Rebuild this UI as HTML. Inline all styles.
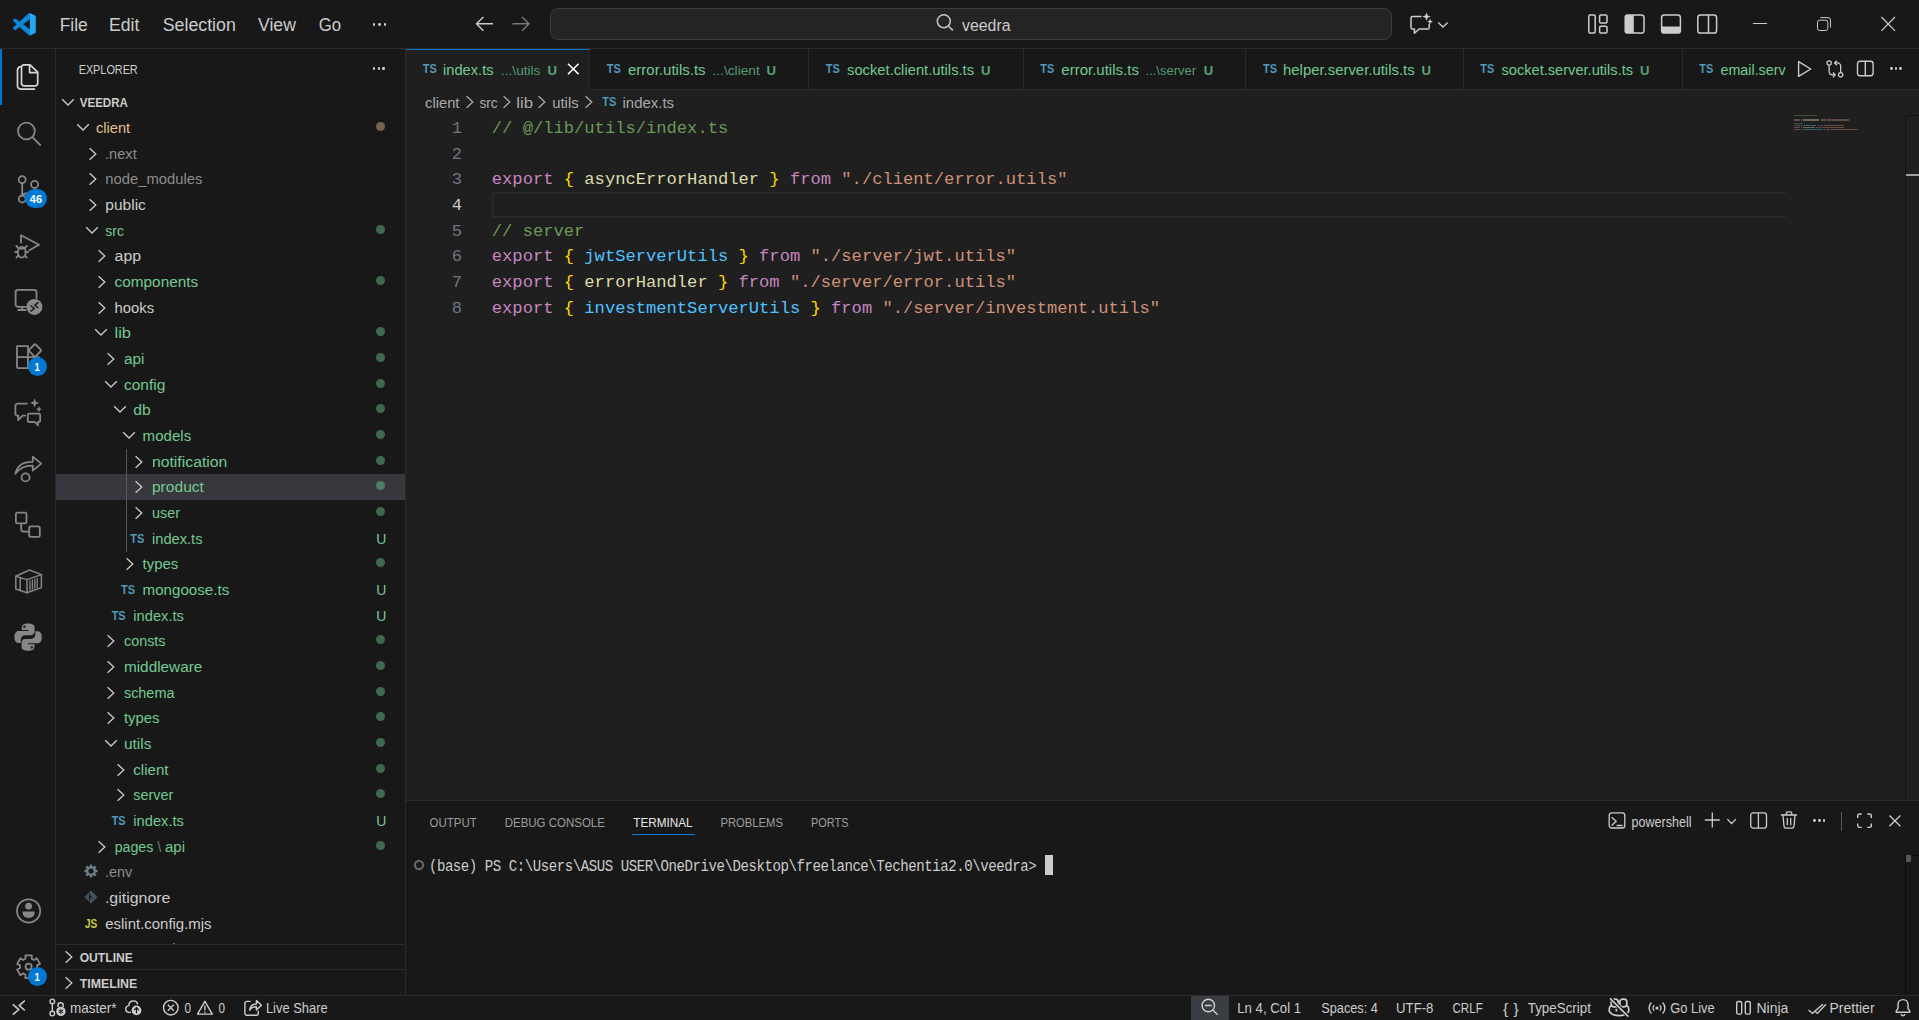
<!DOCTYPE html><html lang="en"><head><meta charset="utf-8"><title>index.ts - veedra - Visual Studio Code</title><style>

html,body{margin:0;padding:0;background:#181818;}
body{width:1919px;height:1020px;position:relative;overflow:hidden;font-family:"Liberation Sans",sans-serif;}
body>div,body>svg,body>span{position:absolute;display:block;}
svg{overflow:visible;}
.t{left:0;white-space:pre;line-height:24px;height:24px;transform-origin:0 0;}
.m{font-family:"Liberation Mono",monospace;}

</style></head><body>
<div style="left:406px;top:49px;width:1513px;height:751px;background:#1f1f1f;"></div>
<div style="left:0px;top:48px;width:1919px;height:1px;background:#2b2b2b;"></div>
<div style="left:55px;top:49px;width:1px;height:946px;background:#2b2b2b;"></div>
<div style="left:405px;top:49px;width:1px;height:946px;background:#2b2b2b;"></div>
<div style="left:0px;top:995px;width:1919px;height:1px;background:#2b2b2b;"></div>
<svg style="left:12.8px;top:12.6px;" width="22.6" height="22.6" viewBox="0 0 100 100" fill="none">
<path d="M96.46 10.8 L75.86 0.88 a6.23 6.23 0 0 0 -7.1 1.2 L29.35 38.04 12.19 25.01 a4.16 4.16 0 0 0 -5.32 0.24 L1.37 30.26 a4.17 4.17 0 0 0 0 6.16 L16.25 50 1.36 63.58 a4.17 4.17 0 0 0 0 6.16 l5.51 5.01 a4.16 4.16 0 0 0 5.32 .24 L29.35 61.96 68.76 97.92 a6.23 6.23 0 0 0 7.1 1.21 l20.6-9.91 A6.25 6.25 0 0 0 100 83.59 V16.41 a6.25 6.25 0 0 0 -3.54 -5.63 Z M75.01 72.7 L45.11 50 75.01 27.3 Z" fill="#1085d6" fill-rule="evenodd"/>
<path d="M75.01 1 L96.46 10.8 A6.25 6.25 0 0 1 100 16.41 V83.59 a6.25 6.25 0 0 1 -3.54 5.63 L75.01 99 Z" fill="#25a8f1"/>
</svg>
<div style="left:372.55px;top:22.75px;width:2.9px;height:2.9px;background:#cccccc;border-radius:50%;"></div>
<div style="left:378.05px;top:22.75px;width:2.9px;height:2.9px;background:#cccccc;border-radius:50%;"></div>
<div style="left:383.55px;top:22.75px;width:2.9px;height:2.9px;background:#cccccc;border-radius:50%;"></div>
<svg style="left:474px;top:13px;" width="22" height="22" viewBox="0 0 22 22" fill="none"><path d="M19 10.800H2.800M9.400 3.900L2.500 10.800l6.900 7" stroke="#cccccc" stroke-width="1.4"/></svg>
<svg style="left:510px;top:13px;" width="22" height="22" viewBox="0 0 22 22" fill="none"><path d="M2.500 10.800h16.200M12.100 3.900l6.900 6.900-6.900 7" stroke="#7a7a7a" stroke-width="1.4"/></svg>
<div style="left:550px;top:8px;width:842px;height:32px;background:#242424;box-sizing:border-box;border:1px solid #3c3c3c;border-radius:8px;"></div>
<svg style="left:934px;top:12px;" width="22" height="22" viewBox="0 0 22 22" fill="none"><circle cx="9.800" cy="9.300" r="6.500" stroke="#c4c4c4" stroke-width="1.500"/><path d="M14.300 14l4.600 4.400" stroke="#c4c4c4" stroke-width="1.500"/></svg>
<svg style="left:1406px;top:10px;" width="30" height="28" viewBox="0 0 30 28" fill="none"><path d="M15.500 6.400H6.600a1.600 1.600 0 0 0-1.600 1.600v9.400a1.600 1.600 0 0 0 1.600 1.600h1.800v4.200l4.800-4.200h8.400a1.600 1.600 0 0 0 1.600-1.600v-3.600" stroke="#cccccc" stroke-width="1.5" stroke-linejoin="round"/>
<path d="M20.500 2.400l1.200 3 3 1.200-3 1.200-1.200 3-1.200-3-3-1.200 3-1.200z" fill="#cccccc"/><path d="M24 8.700l.85 2 2 .85-2 .85-.85 2-.85-2-2-.85 2-.85z" fill="#cccccc"/></svg>
<svg style="left:1436px;top:18px;" width="14" height="12" viewBox="0 0 14 12" fill="none"><path d="M2.300 4.500L7 9l4.700-4.500" stroke="#cccccc" stroke-width="1.3"/></svg>
<svg style="left:1586px;top:12px;" width="24" height="24" viewBox="0 0 24 24" fill="none"><rect x="2.8" y="3.1" width="6.4" height="17.9" rx="1.2" stroke="#cccccc" stroke-width="1.5"/><rect x="13.6" y="3.1" width="7.4" height="7.9" rx="1.2" stroke="#cccccc" stroke-width="1.5"/><rect x="13.6" y="14.3" width="7.4" height="6.7" rx="1.2" stroke="#cccccc" stroke-width="1.5"/></svg>
<svg style="left:1623px;top:12px;" width="24" height="24" viewBox="0 0 24 24" fill="none"><rect x="2.2" y="3" width="18.8" height="18" rx="2.6" stroke="#cccccc" stroke-width="1.5"/><path d="M4.8 3h6v18h-6a2.6 2.6 0 0 1-2.6-2.6V5.600A2.600 2.600 0 0 1 4.800 3z" fill="#cccccc"/></svg>
<svg style="left:1659px;top:12px;" width="24" height="24" viewBox="0 0 24 24" fill="none"><rect x="2.6" y="3" width="18.800" height="18" rx="2.6" stroke="#cccccc" stroke-width="1.5"/><path d="M2.600 14.600h18.800v3.800a2.600 2.600 0 0 1-2.600 2.600H5.200a2.600 2.600 0 0 1-2.600-2.600z" fill="#cccccc"/></svg>
<svg style="left:1696px;top:12px;" width="24" height="24" viewBox="0 0 24 24" fill="none"><rect x="1.800" y="3" width="18.800" height="18" rx="2.600" stroke="#cccccc" stroke-width="1.5"/><path d="M12.500 3v18" stroke="#cccccc" stroke-width="1.5"/></svg>
<div style="left:1753px;top:23px;width:14px;height:1px;background:#cccccc;"></div>
<svg style="left:1815px;top:15px;" width="18" height="18" viewBox="0 0 18 18" fill="none"><rect x="2.5" y="5.200" width="10.300" height="10.300" rx="2" stroke="#cccccc" stroke-width="1"/><path d="M5.500 2.600h7.500a2.500 2.500 0 0 1 2.500 2.500v7.500" stroke="#cccccc" stroke-width="1"/></svg>
<svg style="left:1879px;top:15px;" width="18" height="18" viewBox="0 0 18 18" fill="none"><path d="M2.400 2l13.600 13.900M16 2L2.400 15.900" stroke="#cccccc" stroke-width="1.2"/></svg>
<div style="left:0px;top:49px;width:2px;height:56px;background:#0078d4;"></div>
<svg style="left:13.5px;top:63px;" width="28" height="28" viewBox="0 0 28 28" fill="none"><path d="M10 1.800H16L23.700 9.200V20.400a2.400 2.400 0 0 1-2.400 2.400H9.900a2.400 2.400 0 0 1-2.400-2.400V4.200a2.400 2.400 0 0 1 2.400-2.400z" stroke="#d7d7d7" stroke-width="1.7" fill="none" stroke-linejoin="round"/>
<path d="M15.600 2.200V9.600H23.300" stroke="#d7d7d7" stroke-width="1.7" fill="none" stroke-linejoin="round"/>
<path d="M6.200 3.600C4.600 4.200 3.500 5.400 3.500 7.200V22.800a3.400 3.400 0 0 0 3.400 3.400H20.400" stroke="#d7d7d7" stroke-width="1.7" fill="none" stroke-linecap="round"/></svg>
<svg style="left:13.5px;top:119px;" width="28" height="28" viewBox="0 0 28 28" fill="none"><circle cx="12.4" cy="12" r="8.4" stroke="#868686" stroke-width="1.8" fill="none" stroke-linejoin="round" stroke-linecap="round"/><path d="M18.6 18.4l7.6 7.6" stroke="#868686" stroke-width="1.8" fill="none" stroke-linejoin="round" stroke-linecap="round"/></svg>
<svg style="left:13.5px;top:176px;" width="28" height="28" viewBox="0 0 28 28" fill="none"><circle cx="8.200" cy="3.600" r="3.500" stroke="#868686" stroke-width="1.8" fill="none" stroke-linejoin="round" stroke-linecap="round"/><circle cx="8.200" cy="23" r="3.500" stroke="#868686" stroke-width="1.8" fill="none" stroke-linejoin="round" stroke-linecap="round"/><circle cx="20.600" cy="8.400" r="3.500" stroke="#868686" stroke-width="1.8" fill="none" stroke-linejoin="round" stroke-linecap="round"/><path d="M8.200 7.100v12.400M20.600 11.900v1.600a4 4 0 0 1-4 4H12.200a4 4 0 0 0-4 2.400" stroke="#868686" stroke-width="1.8" fill="none" stroke-linejoin="round" stroke-linecap="round"/></svg>
<div style="left:25px;top:189px;width:22px;height:19px;background:#0078d4;border-radius:10px;"></div>
<svg style="left:13.5px;top:232px;" width="28" height="28" viewBox="0 0 28 28" fill="none"><path d="M7 10.5V3.2l18 9.6-9.6 5.4" stroke="#868686" stroke-width="1.8" fill="none" stroke-linejoin="round" stroke-linecap="round"/>
<ellipse cx="7.800" cy="20.200" rx="4" ry="5.400" stroke="#868686" stroke-width="1.8" fill="none" stroke-linejoin="round" stroke-linecap="round"/><path d="M4.6 16.2L2.4 14M10.6 16.2l2.2-2.2M4 20H1.2M11.2 20H14M4.6 23.4l-2.2 2.2M10.6 23.4l2.2 2.2M5 16.6h5.2" stroke="#868686" stroke-width="1.8" fill="none" stroke-linejoin="round" stroke-linecap="round"/></svg>
<svg style="left:13.5px;top:288px;" width="28" height="28" viewBox="0 0 28 28" fill="none"><path d="M12 18.900H4A2.400 2.400 0 0 1 1.600 16.500V4.300A2.400 2.400 0 0 1 4 1.900h16.100a2.400 2.400 0 0 1 2.400 2.400V10" stroke="#868686" stroke-width="1.8" fill="none" stroke-linejoin="round" stroke-linecap="round"/><path d="M4.200 22h7.400M8.200 19.200v2.600" stroke="#868686" stroke-width="1.8" fill="none" stroke-linejoin="round" stroke-linecap="round"/>
<circle cx="20.400" cy="18.900" r="8" fill="#8a8a8a"/><path d="M16.500 17.500l3.700 3-3.700 2.900M24.300 14.400l-3.500 2.900 3.500 2.700" stroke="#181818" stroke-width="1.500" fill="none"/></svg>
<svg style="left:13.5px;top:344px;" width="28" height="28" viewBox="0 0 28 28" fill="none"><path d="M3 2.200h11v22H4.200A1.200 1.200 0 0 1 3 23zM3 13.200h22v9.800a1.200 1.200 0 0 1-1.200 1.200H14" stroke="#868686" stroke-width="1.8" fill="none" stroke-linejoin="round" stroke-linecap="round"/>
<rect x="16.400" y="1.800" width="9.200" height="9.200" rx="1.200" transform="rotate(45 21 6.400)" stroke="#868686" stroke-width="1.8" fill="none" stroke-linejoin="round" stroke-linecap="round"/></svg>
<div style="left:28px;top:357px;width:19px;height:19px;background:#0078d4;border-radius:50%;"></div>
<svg style="left:13.5px;top:399px;" width="28" height="28" viewBox="0 0 28 28" fill="none"><path d="M13 4.6H3.6A2.2 2.2 0 0 0 1.4 6.8v7.6a2.2 2.2 0 0 0 2.2 2.2h.6v4.6l4.400-4.600h2.600" stroke="#868686" stroke-width="1.8" fill="none" stroke-linejoin="round" stroke-linecap="round"/>
<path d="M15.400 14.600h9.200a1.600 1.600 0 0 1 1.600 1.600v5.200a1.600 1.600 0 0 1-1.600 1.600H24v3.400L20.800 23h-5.400a1.600 1.600 0 0 1-1.600-1.600v-5.200a1.600 1.600 0 0 1 1.600-1.600z" stroke="#868686" stroke-width="1.8" fill="none" stroke-linejoin="round" stroke-linecap="round"/>
<path d="M20.600 -0.600l1.300 3.300 3.300 1.300-3.300 1.300-1.300 3.300-1.300-3.300L16 4l3.300-1.300z" fill="#868686"/><path d="M25 7l.9 2.300 2.300.9-2.300.9-.9 2.300-.9-2.300-2.300-.9 2.300-.9z" fill="#868686"/></svg>
<svg style="left:13.5px;top:455px;" width="28" height="28" viewBox="0 0 28 28" fill="none"><path d="M1.400 18.800C3 10.600 9.400 6.600 18.800 6.800V1.600L27.200 8.600l-8.400 7v-5C11 10.400 5.400 13 1.400 18.800Z" stroke="#868686" stroke-width="1.8" fill="none" stroke-linejoin="round" stroke-linecap="round"/><circle cx="11.600" cy="22.400" r="4" stroke="#868686" stroke-width="1.8" fill="none" stroke-linejoin="round" stroke-linecap="round"/></svg>
<svg style="left:13.5px;top:511px;" width="28" height="28" viewBox="0 0 28 28" fill="none"><rect x="1.900" y="1.700" width="10.600" height="10.600" rx="1.600" stroke="#868686" stroke-width="1.8" fill="none" stroke-linejoin="round" stroke-linecap="round"/><rect x="15.200" y="15.300" width="10.600" height="10.600" rx="1.600" stroke="#868686" stroke-width="1.8" fill="none" stroke-linejoin="round" stroke-linecap="round"/><path d="M7.200 12.600V18a2.600 2.600 0 0 0 2.600 2.600h5.200" stroke="#868686" stroke-width="1.8" fill="none" stroke-linejoin="round" stroke-linecap="round"/></svg>
<svg style="left:13.5px;top:567px;" width="28" height="28" viewBox="0 0 28 28" fill="none"><path d="M1.800 9.200L15.400 3l12 4.600v13L13 25.800 1.800 22z" stroke="#868686" stroke-width="1.5" fill="none" stroke-linejoin="round" stroke-linecap="round"/><path d="M1.800 9.200L13 12.600l14.400-5M13 12.600v13.200M6.200 10.800v12.600" stroke="#868686" stroke-width="1.5" fill="none" stroke-linejoin="round" stroke-linecap="round"/>
<path d="M16 13.400v10M18.400 12.600v10M20.800 11.800v10M23.200 11v10" stroke="#868686" stroke-width="1.3"/></svg>
<svg style="left:13.5px;top:623px;" width="28" height="28" viewBox="0 0 28 28" fill="none"><path d="M13.800 0.400c-3.600 0-6 1.200-6 3.600v3h6.400v1H4.600C2 8 0.400 10.400 0.400 14s1.400 6 4 6h2.400v-3.400c0-2.400 2-4.400 4.400-4.400h6c2 0 3.400-1.600 3.400-3.600V4c0-2.200-2.400-3.600-6.800-3.600zM10.400 2.600a1.200 1.200 0 1 1 0 2.400 1.200 1.200 0 0 1 0-2.400z" fill="#868686" fill-rule="evenodd"/>
<path d="M14.400 27.800c3.600 0 6-1.200 6-3.600v-3H14v-1h9.600c2.600 0 4.200-2.400 4.200-6s-1.400-6-4-6h-2.400v3.400c0 2.400-2 4.400-4.400 4.400h-6c-2 0-3.400 1.600-3.400 3.600v4.600c0 2.200 2.400 3.600 6.800 3.600zM17.800 25.600a1.200 1.200 0 1 1 0-2.400 1.200 1.200 0 0 1 0 2.400z" fill="#868686" fill-rule="evenodd"/></svg>
<svg style="left:13.5px;top:897px;" width="28" height="28" viewBox="0 0 28 28" fill="none"><circle cx="14.600" cy="13.900" r="11.600" stroke="#868686" stroke-width="1.8" fill="none" stroke-linejoin="round" stroke-linecap="round"/><circle cx="14.600" cy="9.200" r="3.400" fill="#868686"/><path d="M8.600 14.600h12v1.200c0 3-2.400 5.200-6 5.200s-6-2.200-6-5.200z" fill="#868686"/></svg>
<svg style="left:13.5px;top:953px;" width="28" height="28" viewBox="0 0 28 28" fill="none"><path d="M11.35 2.36L17.85 2.36L17.68 5.67L20.01 7.02L22.80 5.21L26.05 10.85L23.09 12.35L23.09 15.05L26.05 16.55L22.80 22.19L20.01 20.38L17.68 21.73L17.85 25.04L11.35 25.04L11.52 21.73L9.19 20.38L6.40 22.19L3.15 16.55L6.11 15.05L6.11 12.35L3.15 10.85L6.40 5.21L9.19 7.02L11.52 5.67Z" stroke="#868686" stroke-width="1.8" fill="none" stroke-linejoin="round" stroke-linecap="round"/><circle cx="14.6" cy="13.7" r="3" stroke="#868686" stroke-width="1.8" fill="none" stroke-linejoin="round" stroke-linecap="round"/></svg>
<div style="left:28px;top:967px;width:19px;height:19px;background:#0078d4;border-radius:50%;"></div>
<div style="left:372.7px;top:67.0px;width:2.6px;height:2.6px;background:#cccccc;border-radius:50%;"></div>
<div style="left:377.5px;top:67.0px;width:2.6px;height:2.6px;background:#cccccc;border-radius:50%;"></div>
<div style="left:382.3px;top:67.0px;width:2.6px;height:2.6px;background:#cccccc;border-radius:50%;"></div>
<div style="left:56px;top:474px;width:349px;height:26px;background:#37373d;"></div>
<div style="left:126px;top:449px;width:1px;height:103px;background:#585858;"></div>
<svg style="left:61px;top:94.5px;" width="14" height="14" viewBox="0 0 14 14" fill="none"><path d="M1.200 4.200L7 10l5.800-5.800" stroke="#cccccc" stroke-width="1.3"/></svg>
<svg style="left:75.83299999999998px;top:120.10000000000001px;" width="14" height="14" viewBox="0 0 14 14" fill="none"><path d="M1.200 4.200L7 10l5.800-5.800" stroke="#cccccc" stroke-width="1.3"/></svg>
<div style="left:375.6px;top:122.10000000000001px;width:9.2px;height:9.2px;background:#75634f;border-radius:50%;"></div>
<svg style="left:85.66599999999998px;top:146.6px;" width="14" height="14" viewBox="0 0 14 14" fill="none"><path d="M3.600 1.200L9.800 7l-6.200 5.800" stroke="#cccccc" stroke-width="1.3"/></svg>
<svg style="left:85.66599999999998px;top:171.6px;" width="14" height="14" viewBox="0 0 14 14" fill="none"><path d="M3.600 1.200L9.800 7l-6.200 5.800" stroke="#cccccc" stroke-width="1.3"/></svg>
<svg style="left:85.66599999999998px;top:197.6px;" width="14" height="14" viewBox="0 0 14 14" fill="none"><path d="M3.600 1.200L9.800 7l-6.200 5.800" stroke="#cccccc" stroke-width="1.3"/></svg>
<svg style="left:85.16599999999998px;top:223.1px;" width="14" height="14" viewBox="0 0 14 14" fill="none"><path d="M1.200 4.200L7 10l5.800-5.800" stroke="#cccccc" stroke-width="1.3"/></svg>
<div style="left:375.7px;top:225.20000000000002px;width:9px;height:9px;background:#3d6a4f;border-radius:50%;"></div>
<svg style="left:94.99899999999998px;top:248.6px;" width="14" height="14" viewBox="0 0 14 14" fill="none"><path d="M3.600 1.200L9.800 7l-6.200 5.800" stroke="#cccccc" stroke-width="1.3"/></svg>
<svg style="left:94.99899999999998px;top:274.59999999999997px;" width="14" height="14" viewBox="0 0 14 14" fill="none"><path d="M3.600 1.200L9.800 7l-6.200 5.800" stroke="#cccccc" stroke-width="1.3"/></svg>
<div style="left:375.7px;top:276.2px;width:9px;height:9px;background:#3d6a4f;border-radius:50%;"></div>
<svg style="left:94.99899999999998px;top:300.59999999999997px;" width="14" height="14" viewBox="0 0 14 14" fill="none"><path d="M3.600 1.200L9.800 7l-6.200 5.800" stroke="#cccccc" stroke-width="1.3"/></svg>
<svg style="left:94.49899999999998px;top:325.09999999999997px;" width="14" height="14" viewBox="0 0 14 14" fill="none"><path d="M1.200 4.200L7 10l5.800-5.800" stroke="#cccccc" stroke-width="1.3"/></svg>
<div style="left:375.7px;top:327.2px;width:9px;height:9px;background:#3d6a4f;border-radius:50%;"></div>
<svg style="left:104.33199999999998px;top:351.59999999999997px;" width="14" height="14" viewBox="0 0 14 14" fill="none"><path d="M3.600 1.200L9.800 7l-6.200 5.800" stroke="#cccccc" stroke-width="1.3"/></svg>
<div style="left:375.7px;top:353.2px;width:9px;height:9px;background:#3d6a4f;border-radius:50%;"></div>
<svg style="left:103.83199999999998px;top:377.09999999999997px;" width="14" height="14" viewBox="0 0 14 14" fill="none"><path d="M1.200 4.200L7 10l5.800-5.800" stroke="#cccccc" stroke-width="1.3"/></svg>
<div style="left:375.7px;top:379.2px;width:9px;height:9px;background:#3d6a4f;border-radius:50%;"></div>
<svg style="left:113.16499999999998px;top:402.09999999999997px;" width="14" height="14" viewBox="0 0 14 14" fill="none"><path d="M1.200 4.200L7 10l5.800-5.800" stroke="#cccccc" stroke-width="1.3"/></svg>
<div style="left:375.7px;top:404.2px;width:9px;height:9px;background:#3d6a4f;border-radius:50%;"></div>
<svg style="left:122.49800000000002px;top:428.09999999999997px;" width="14" height="14" viewBox="0 0 14 14" fill="none"><path d="M1.200 4.200L7 10l5.800-5.800" stroke="#cccccc" stroke-width="1.3"/></svg>
<div style="left:375.7px;top:430.2px;width:9px;height:9px;background:#3d6a4f;border-radius:50%;"></div>
<svg style="left:132.331px;top:454.59999999999997px;" width="14" height="14" viewBox="0 0 14 14" fill="none"><path d="M3.600 1.200L9.800 7l-6.200 5.800" stroke="#cccccc" stroke-width="1.3"/></svg>
<div style="left:375.7px;top:456.2px;width:9px;height:9px;background:#3d6a4f;border-radius:50%;"></div>
<svg style="left:132.331px;top:479.59999999999997px;" width="14" height="14" viewBox="0 0 14 14" fill="none"><path d="M3.600 1.200L9.800 7l-6.200 5.800" stroke="#cccccc" stroke-width="1.3"/></svg>
<div style="left:375.7px;top:481.2px;width:9px;height:9px;background:#4d7d63;border-radius:50%;"></div>
<svg style="left:132.331px;top:505.6px;" width="14" height="14" viewBox="0 0 14 14" fill="none"><path d="M3.600 1.200L9.800 7l-6.200 5.800" stroke="#cccccc" stroke-width="1.3"/></svg>
<div style="left:375.7px;top:507.2px;width:9px;height:9px;background:#3d6a4f;border-radius:50%;"></div>
<svg style="left:122.99800000000002px;top:556.6px;" width="14" height="14" viewBox="0 0 14 14" fill="none"><path d="M3.600 1.200L9.800 7l-6.200 5.800" stroke="#cccccc" stroke-width="1.3"/></svg>
<div style="left:375.7px;top:558.1999999999999px;width:9px;height:9px;background:#3d6a4f;border-radius:50%;"></div>
<svg style="left:104.33199999999998px;top:633.6px;" width="14" height="14" viewBox="0 0 14 14" fill="none"><path d="M3.600 1.200L9.800 7l-6.200 5.800" stroke="#cccccc" stroke-width="1.3"/></svg>
<div style="left:375.7px;top:635.1999999999999px;width:9px;height:9px;background:#3d6a4f;border-radius:50%;"></div>
<svg style="left:104.33199999999998px;top:659.6px;" width="14" height="14" viewBox="0 0 14 14" fill="none"><path d="M3.600 1.200L9.800 7l-6.200 5.800" stroke="#cccccc" stroke-width="1.3"/></svg>
<div style="left:375.7px;top:661.1999999999999px;width:9px;height:9px;background:#3d6a4f;border-radius:50%;"></div>
<svg style="left:104.33199999999998px;top:685.6px;" width="14" height="14" viewBox="0 0 14 14" fill="none"><path d="M3.600 1.200L9.800 7l-6.200 5.800" stroke="#cccccc" stroke-width="1.3"/></svg>
<div style="left:375.7px;top:687.1999999999999px;width:9px;height:9px;background:#3d6a4f;border-radius:50%;"></div>
<svg style="left:104.33199999999998px;top:710.6px;" width="14" height="14" viewBox="0 0 14 14" fill="none"><path d="M3.600 1.200L9.800 7l-6.200 5.800" stroke="#cccccc" stroke-width="1.3"/></svg>
<div style="left:375.7px;top:712.1999999999999px;width:9px;height:9px;background:#3d6a4f;border-radius:50%;"></div>
<svg style="left:103.83199999999998px;top:736.1px;" width="14" height="14" viewBox="0 0 14 14" fill="none"><path d="M1.200 4.200L7 10l5.800-5.800" stroke="#cccccc" stroke-width="1.3"/></svg>
<div style="left:375.7px;top:738.1999999999999px;width:9px;height:9px;background:#3d6a4f;border-radius:50%;"></div>
<svg style="left:113.66499999999998px;top:762.6px;" width="14" height="14" viewBox="0 0 14 14" fill="none"><path d="M3.600 1.200L9.800 7l-6.200 5.800" stroke="#cccccc" stroke-width="1.3"/></svg>
<div style="left:375.7px;top:764.1999999999999px;width:9px;height:9px;background:#3d6a4f;border-radius:50%;"></div>
<svg style="left:113.66499999999998px;top:787.6px;" width="14" height="14" viewBox="0 0 14 14" fill="none"><path d="M3.600 1.200L9.800 7l-6.200 5.800" stroke="#cccccc" stroke-width="1.3"/></svg>
<div style="left:375.7px;top:789.1999999999999px;width:9px;height:9px;background:#3d6a4f;border-radius:50%;"></div>
<svg style="left:94.99899999999998px;top:839.6px;" width="14" height="14" viewBox="0 0 14 14" fill="none"><path d="M3.600 1.200L9.800 7l-6.200 5.800" stroke="#cccccc" stroke-width="1.3"/></svg>
<div style="left:375.7px;top:841.1999999999999px;width:9px;height:9px;background:#3d6a4f;border-radius:50%;"></div>
<svg style="left:82.76599999999999px;top:863.1px;" width="16" height="16" viewBox="0 0 16 16" fill="none"><path d="M14.60 6.84L14.60 9.16L12.86 9.17L12.26 10.61L13.49 11.84L11.84 13.49L10.61 12.26L9.17 12.86L9.16 14.60L6.84 14.60L6.83 12.86L5.39 12.26L4.16 13.49L2.51 11.84L3.74 10.61L3.14 9.17L1.40 9.16L1.40 6.84L3.14 6.83L3.74 5.39L2.51 4.16L4.16 2.51L5.39 3.74L6.83 3.14L6.84 1.40L9.16 1.40L9.17 3.14L10.61 3.74L11.84 2.51L13.49 4.16L12.26 5.39L12.86 6.83Z M8 5.400a2.600 2.600 0 1 0 0 5.200a2.600 2.600 0 1 0 0-5.200z" fill="#6d8086" fill-rule="evenodd"/></svg>
<svg style="left:82.56599999999999px;top:889.1999999999999px;" width="16" height="16" viewBox="0 0 16 16" fill="none"><rect x="3.400" y="3.400" width="9.200" height="9.200" transform="rotate(45 8 8)" fill="#41535b"/><path d="M6.600 4.800v6.400M6.600 7l3 2.400" stroke="#181818" stroke-width="1.1"/></svg>
<div style="left:173px;top:943px;width:2px;height:1px;background:#666666;"></div>
<div style="left:56px;top:944px;width:349px;height:1px;background:#2b2b2b;"></div>
<div style="left:56px;top:969px;width:349px;height:1px;background:#2b2b2b;"></div>
<svg style="left:61.599999999999994px;top:950px;" width="14" height="14" viewBox="0 0 14 14" fill="none"><path d="M3.600 1.200L9.800 7l-6.200 5.800" stroke="#cccccc" stroke-width="1.3"/></svg>
<svg style="left:61.599999999999994px;top:975.8px;" width="14" height="14" viewBox="0 0 14 14" fill="none"><path d="M3.600 1.200L9.800 7l-6.200 5.800" stroke="#cccccc" stroke-width="1.3"/></svg>
<div style="left:406px;top:49px;width:1513px;height:41px;background:#181818;"></div>
<div style="left:406px;top:89px;width:1513px;height:1px;background:#2b2b2b;"></div>
<div style="left:406px;top:49px;width:183px;height:41px;background:#1f1f1f;"></div>
<div style="left:406px;top:49px;width:183px;height:1px;background:#0078d4;"></div>
<div style="left:589px;top:49px;width:1px;height:41px;background:#2b2b2b;"></div>
<div style="left:808px;top:49px;width:1px;height:41px;background:#2b2b2b;"></div>
<div style="left:1023px;top:49px;width:1px;height:41px;background:#2b2b2b;"></div>
<div style="left:1245px;top:49px;width:1px;height:41px;background:#2b2b2b;"></div>
<div style="left:1463px;top:49px;width:1px;height:41px;background:#2b2b2b;"></div>
<div style="left:1682px;top:49px;width:1px;height:41px;background:#2b2b2b;"></div>
<svg style="left:566px;top:61px;" width="15" height="15" viewBox="0 0 15 15" fill="none"><path d="M2 2.700l10.600 10.400M12.600 2.700L2 13.100" stroke="#ffffff" stroke-width="1.5"/></svg>
<svg style="left:1794px;top:59px;" width="20" height="20" viewBox="0 0 20 20" fill="none"><path d="M4.600 2.600v14.800L16.800 10z" stroke="#cccccc" stroke-width="1.4" stroke-linejoin="round"/></svg>
<svg style="left:1825px;top:59px;" width="20" height="20" viewBox="0 0 20 20" fill="none"><g transform="scale(0.9)"><circle cx="4.600" cy="4.400" r="2.400" stroke="#cccccc" stroke-width="1.4"/><circle cx="17.400" cy="17.600" r="2.400" stroke="#cccccc" stroke-width="1.4"/>
<path d="M4.600 6.800v7.400a3.400 3.400 0 0 0 3.400 3.400h3.200M8.800 15l2.600 2.600-2.600 2.600M17.400 15.200V7.800a3.400 3.400 0 0 0-3.400-3.400h-3.200M13.200 7l-2.600-2.600 2.600-2.600" stroke="#cccccc" stroke-width="1.4"/></g></svg>
<svg style="left:1855px;top:59px;" width="20" height="20" viewBox="0 0 20 20" fill="none"><rect x="2.500" y="2.300" width="15.600" height="14.400" rx="2.400" stroke="#cccccc" stroke-width="1.4"/><path d="M10.300 2.300v14.400" stroke="#cccccc" stroke-width="1.4"/></svg>
<div style="left:1889.9px;top:67.4px;width:2.8px;height:2.8px;background:#cccccc;border-radius:50%;"></div>
<div style="left:1894.6px;top:67.4px;width:2.8px;height:2.8px;background:#cccccc;border-radius:50%;"></div>
<div style="left:1899.3px;top:67.4px;width:2.8px;height:2.8px;background:#cccccc;border-radius:50%;"></div>
<svg style="left:463.3px;top:94.9px;" width="14" height="14" viewBox="0 0 14 14" fill="none"><path d="M3.600 1.200L9.800 7l-6.200 5.800" stroke="#a9a9a9" stroke-width="1.3"/></svg>
<svg style="left:500.3px;top:94.9px;" width="14" height="14" viewBox="0 0 14 14" fill="none"><path d="M3.600 1.200L9.800 7l-6.200 5.800" stroke="#a9a9a9" stroke-width="1.3"/></svg>
<svg style="left:535.4px;top:94.9px;" width="14" height="14" viewBox="0 0 14 14" fill="none"><path d="M3.600 1.200L9.800 7l-6.200 5.800" stroke="#a9a9a9" stroke-width="1.3"/></svg>
<svg style="left:581.9px;top:94.9px;" width="14" height="14" viewBox="0 0 14 14" fill="none"><path d="M3.600 1.200L9.800 7l-6.200 5.800" stroke="#a9a9a9" stroke-width="1.3"/></svg>
<div style="left:492px;top:192px;width:1294px;height:26px;box-sizing:border-box;border:2px solid #282828;border-right:none;"></div>
<div style="left:1794.0px;top:115.2px;width:22.5px;height:1.2px;background:#45603b;opacity:.8;"></div>
<div style="left:1794.0px;top:119.4px;width:5.9px;height:1.2px;background:#6d5470;opacity:.8;"></div>
<div style="left:1800.9px;top:119.4px;width:1.0px;height:1.2px;background:#7d6f22;opacity:.8;"></div>
<div style="left:1802.8px;top:119.4px;width:16.7px;height:1.2px;background:#7d7d66;opacity:.8;"></div>
<div style="left:1820.5px;top:119.4px;width:1.0px;height:1.2px;background:#7d6f22;opacity:.8;"></div>
<div style="left:1822.4px;top:119.4px;width:3.9px;height:1.2px;background:#6d5470;opacity:.8;"></div>
<div style="left:1827.3px;top:119.4px;width:21.6px;height:1.2px;background:#73574a;opacity:.8;"></div>
<div style="left:1794.0px;top:123.2px;width:8.8px;height:1.2px;background:#45603b;opacity:.8;"></div>
<div style="left:1794.0px;top:125.2px;width:5.9px;height:1.2px;background:#6d5470;opacity:.8;"></div>
<div style="left:1800.9px;top:125.2px;width:1.0px;height:1.2px;background:#7d6f22;opacity:.8;"></div>
<div style="left:1802.8px;top:125.2px;width:13.7px;height:1.2px;background:#33708f;opacity:.8;"></div>
<div style="left:1817.5px;top:125.2px;width:1.0px;height:1.2px;background:#7d6f22;opacity:.8;"></div>
<div style="left:1819.5px;top:125.2px;width:3.9px;height:1.2px;background:#6d5470;opacity:.8;"></div>
<div style="left:1824.4px;top:125.2px;width:19.6px;height:1.2px;background:#73574a;opacity:.8;"></div>
<div style="left:1794.0px;top:127.3px;width:5.9px;height:1.2px;background:#6d5470;opacity:.8;"></div>
<div style="left:1800.9px;top:127.3px;width:1.0px;height:1.2px;background:#7d6f22;opacity:.8;"></div>
<div style="left:1802.8px;top:127.3px;width:11.8px;height:1.2px;background:#7d7d66;opacity:.8;"></div>
<div style="left:1815.6px;top:127.3px;width:1.0px;height:1.2px;background:#7d6f22;opacity:.8;"></div>
<div style="left:1817.5px;top:127.3px;width:3.9px;height:1.2px;background:#6d5470;opacity:.8;"></div>
<div style="left:1822.4px;top:127.3px;width:21.6px;height:1.2px;background:#73574a;opacity:.8;"></div>
<div style="left:1794.0px;top:129.3px;width:5.9px;height:1.2px;background:#6d5470;opacity:.8;"></div>
<div style="left:1800.9px;top:129.3px;width:1.0px;height:1.2px;background:#7d6f22;opacity:.8;"></div>
<div style="left:1802.8px;top:129.3px;width:20.6px;height:1.2px;background:#33708f;opacity:.8;"></div>
<div style="left:1824.4px;top:129.3px;width:1.0px;height:1.2px;background:#7d6f22;opacity:.8;"></div>
<div style="left:1826.3px;top:129.3px;width:3.9px;height:1.2px;background:#6d5470;opacity:.8;"></div>
<div style="left:1831.2px;top:129.3px;width:26.5px;height:1.2px;background:#73574a;opacity:.8;"></div>
<div style="left:1905px;top:115px;width:1px;height:685px;background:#101114;"></div>
<div style="left:1905px;top:115px;width:14px;height:1px;background:#101114;"></div>
<div style="left:1906px;top:174px;width:13px;height:2px;background:#a0a0a0;"></div>
<div style="left:406px;top:800px;width:1513px;height:195px;background:#181818;"></div>
<div style="left:406px;top:800px;width:1513px;height:1px;background:#2b2b2b;"></div>
<div style="left:631.5px;top:834px;width:63.5px;height:1px;background:#0078d4;"></div>
<svg style="left:1607px;top:810px;" width="20" height="20" viewBox="0 0 20 20" fill="none"><rect x="2.200" y="2.800" width="15.600" height="15.200" rx="2.600" stroke="#cccccc" stroke-width="1.3"/><path d="M4.600 7.200l4.600 4.100-4.600 4.100M9.600 15.500h6" stroke="#cccccc" stroke-width="1.3"/></svg>
<svg style="left:1703px;top:811px;" width="18" height="18" viewBox="0 0 18 18" fill="none"><path d="M9.300 1.400v15.200M1.800 9h15" stroke="#cccccc" stroke-width="1.3"/></svg>
<svg style="left:1725px;top:815px;" width="13" height="12" viewBox="0 0 13 12" fill="none"><path d="M2.300 4.100L6.600 8.500l4.300-4.400" stroke="#cccccc" stroke-width="1.3"/></svg>
<svg style="left:1748px;top:810px;" width="21" height="21" viewBox="0 0 21 21" fill="none"><rect x="2.700" y="2.900" width="15.800" height="15.200" rx="2.400" stroke="#cccccc" stroke-width="1.3"/><path d="M10.400 2.900v15.200" stroke="#cccccc" stroke-width="1.3"/></svg>
<svg style="left:1779px;top:809px;" width="20" height="22" viewBox="0 0 20 22" fill="none"><path d="M2.400 6h15.200M7.200 5.600V4.200a1.400 1.400 0 0 1 1.400-1.400h2.800a1.400 1.400 0 0 1 1.400 1.400v1.400M4 6.200l1 11.200a1.900 1.900 0 0 0 1.900 1.700h6.200a1.900 1.900 0 0 0 1.900-1.700l1-11.200M8.300 9.400v6.400M11.700 9.400v6.400" stroke="#cccccc" stroke-width="1.3" stroke-linecap="round"/></svg>
<div style="left:1812.9px;top:819.2px;width:2.8px;height:2.8px;background:#cccccc;border-radius:50%;"></div>
<div style="left:1817.8px;top:819.2px;width:2.8px;height:2.8px;background:#cccccc;border-radius:50%;"></div>
<div style="left:1822.6px;top:819.2px;width:2.8px;height:2.8px;background:#cccccc;border-radius:50%;"></div>
<div style="left:1841.4px;top:812px;width:1px;height:19px;background:#5a5a5a;"></div>
<svg style="left:1855px;top:811px;" width="19" height="19" viewBox="0 0 19 19" fill="none"><path d="M2.700 7V4.800a1.800 1.800 0 0 1 1.800-1.800h2.200M12.300 3h2.200a1.800 1.800 0 0 1 1.800 1.800v2.200M16.300 12.400v2.200a1.800 1.800 0 0 1-1.800 1.800h-2.200M6.700 16.400H4.500a1.800 1.800 0 0 1-1.800-1.800v-2.200" stroke="#cccccc" stroke-width="1.400"/></svg>
<svg style="left:1887px;top:813px;" width="16" height="16" viewBox="0 0 16 16" fill="none"><path d="M2.400 2.500l11 10.800M13.400 2.500l-11 10.800" stroke="#cccccc" stroke-width="1.300"/></svg>
<svg style="left:412px;top:857.6px;" width="14" height="14" viewBox="0 0 14 14" fill="none"><circle cx="7" cy="7" r="4.100" stroke="#666666" stroke-width="2.100"/></svg>
<div style="left:1044.8px;top:855px;width:8px;height:20px;background:#cccccc;"></div>
<div style="left:1905px;top:855px;width:1px;height:140px;background:#08090c;"></div>
<div style="left:1905px;top:855px;width:14px;height:1px;background:#08090c;"></div>
<div style="left:1906px;top:855px;width:5.2px;height:7px;background:#555555;"></div>
<svg style="left:9px;top:998px;" width="20" height="20" viewBox="0 0 20 20" fill="none"><path d="M3.800 6.400l6 5.200-6 5M15.800 2.600l-5.600 5 5.600 4.800" stroke="#cccccc" stroke-width="1.500"/></svg>
<svg style="left:47px;top:998px;" width="22" height="20" viewBox="0 0 22 20" fill="none"><circle cx="5.300" cy="3.400" r="2.300" stroke="#cccccc" stroke-width="1.400"/><circle cx="5.300" cy="15.600" r="2.300" stroke="#cccccc" stroke-width="1.400"/><path d="M5.300 5.800v7.400" stroke="#cccccc" stroke-width="1.400"/>
<path d="M11 9V7.400a2.600 2.600 0 0 1 5.200 0V9" stroke="#cccccc" stroke-width="1.400"/>
<circle cx="13.900" cy="13.400" r="4.700" fill="#cccccc"/><path d="M13.900 10.800v5.200M11.600 12.100l4.600 2.600M16.200 12.100l-4.600 2.600" stroke="#181818" stroke-width="1"/></svg>
<svg style="left:124px;top:998px;" width="21" height="20" viewBox="0 0 21 20" fill="none"><path d="M7 14.400H5.400a3.400 3.400 0 0 1-.6-6.800 4.600 4.600 0 0 1 9-1.400" stroke="#cccccc" stroke-width="1.400"/>
<circle cx="12.500" cy="12.400" r="4.900" fill="#cccccc"/><path d="M12.500 15.200v-5.200M10.200 12l2.300-2.300 2.300 2.300" stroke="#181818" stroke-width="1.200"/></svg>
<svg style="left:162px;top:999px;" width="18" height="18" viewBox="0 0 18 18" fill="none"><circle cx="8.800" cy="8.700" r="7.300" stroke="#cccccc" stroke-width="1.400"/><path d="M5.800 5.700l6 6M11.800 5.700l-6 6" stroke="#cccccc" stroke-width="1.400"/></svg>
<svg style="left:196px;top:999px;" width="18" height="18" viewBox="0 0 18 18" fill="none"><path d="M8.900 2.300l7.400 12.800H1.500z" stroke="#cccccc" stroke-width="1.400" stroke-linejoin="round"/><path d="M8.900 6.600v4.600M8.900 12.400v1.400" stroke="#cccccc" stroke-width="1.400"/></svg>
<svg style="left:242px;top:997px;" width="21" height="20" viewBox="0 0 21 20" fill="none"><path d="M8.600 4.400H4.800a1.900 1.900 0 0 0-1.900 1.900v10a1.900 1.900 0 0 0 1.900 1.900h9.600a1.900 1.900 0 0 0 1.900-1.900v-2.500" stroke="#cccccc" stroke-width="1.400"/>
<path d="M7.600 13.200c.6-4.200 3.200-6.200 6.800-6.200V3.400L19.400 8.200l-5 4.800V9.800c-3 0-5.200.9-6.800 3.400z" stroke="#cccccc" stroke-width="1.400" stroke-linejoin="round"/></svg>
<div style="left:1191px;top:996px;width:38px;height:24px;background:#3a3d41;"></div>
<svg style="left:1200px;top:998px;" width="20" height="20" viewBox="0 0 20 20" fill="none"><circle cx="8.300" cy="7.500" r="6.200" stroke="#d0d0d0" stroke-width="1.400"/><path d="M12.800 12l4.800 4.800M5 7.500h6.600" stroke="#d0d0d0" stroke-width="1.400"/></svg>
<svg style="left:1608px;top:997px;" width="23" height="22" viewBox="0 0 23 22" fill="none"><path d="M3.400 8.200C2 9.200 1.300 10.400 1.300 11.800v2.600c1.800 2.400 5.200 4.200 9.700 4.200s7.900-1.800 9.700-4.200v-2.600c0-1.400-.7-2.600-2.100-3.600" stroke="#cccccc" stroke-width="1.700"/>
<rect x="3.200" y="2.200" width="7" height="7.600" rx="2.800" stroke="#cccccc" stroke-width="1.700"/><rect x="11.800" y="2.200" width="7" height="7.600" rx="2.800" stroke="#cccccc" stroke-width="1.700"/>
<path d="M8.400 11.800v2.800M13.600 11.800v2.800" stroke="#cccccc" stroke-width="1.800"/>
<path d="M1.600 0.600l19.400 19.400" stroke="#181818" stroke-width="3.600"/><path d="M2 1.400l18.400 18.200" stroke="#cccccc" stroke-width="1.600"/></svg>
<svg style="left:1646.5px;top:998.8px;" width="20" height="18" viewBox="0 0 20 18" fill="none"><circle cx="10" cy="9" r="1.600" fill="#cccccc"/><path d="M7.200 6.200a4 4 0 0 0 0 5.600M12.800 6.200a4 4 0 0 1 0 5.600M4.400 3.400a8 8 0 0 0 0 11.200M15.600 3.400a8 8 0 0 1 0 11.200" stroke="#cccccc" stroke-width="1.400"/></svg>
<svg style="left:1735px;top:999px;" width="18" height="18" viewBox="0 0 18 18" fill="none"><rect x="1.700" y="2.500" width="5" height="12.600" rx="1.600" stroke="#cccccc" stroke-width="1.400"/><rect x="10.300" y="2.500" width="5" height="12.600" rx="1.600" stroke="#cccccc" stroke-width="1.400"/></svg>
<svg style="left:1806px;top:999px;" width="24" height="18" viewBox="0 0 24 18" fill="none"><path d="M2.600 11l3.800 3.400L17 5.200M9.400 12.800l2 1.600L20 5.200" stroke="#cccccc" stroke-width="1.400"/></svg>
<svg style="left:1893px;top:997px;" width="20" height="20" viewBox="0 0 20 20" fill="none"><path d="M10 2.600c-3 0-5 2.200-5 5v3.800L3.200 14.200v1h13.600v-1L15 11.400V7.600c0-2.800-2-5-5-5zM8.200 17a1.800 1.800 0 0 0 3.600 0" stroke="#cccccc" stroke-width="1.400" stroke-linejoin="round"/></svg>
<span class="t" style="top:13.00px;font-size:17.6px;color:#cccccc;transform:translateX(59.71px) scaleX(0.9900);">File</span>
<span class="t" style="top:13.00px;font-size:17.6px;color:#cccccc;transform:translateX(109.00px) scaleX(1.0024);">Edit</span>
<span class="t" style="top:13.00px;font-size:17.6px;color:#cccccc;transform:translateX(162.70px) scaleX(1.0099);">Selection</span>
<span class="t" style="top:13.00px;font-size:17.6px;color:#cccccc;transform:translateX(258.00px) scaleX(1.0023);">View</span>
<span class="t" style="top:13.00px;font-size:17.6px;color:#cccccc;transform:translateX(318.70px) scaleX(0.9500);">Go</span>
<span class="t" style="top:13.00px;font-size:16.3px;color:#cccccc;transform:translateX(962.00px) scaleX(0.9758);">veedra</span>
<span class="t" style="top:187.00px;font-size:11.8px;color:#ffffff;font-weight:700;transform:translateX(29.80px) scaleX(0.9291);">46</span>
<span class="t" style="top:355.00px;font-size:11.8px;color:#ffffff;font-weight:700;transform:translateX(34.60px) scaleX(0.8000);">1</span>
<span class="t" style="top:965.00px;font-size:11.8px;color:#ffffff;font-weight:700;transform:translateX(34.60px) scaleX(0.8000);">1</span>
<span class="t" style="top:58.00px;font-size:12.8px;color:#cccccc;transform:translateX(78.65px) scaleX(0.8473);">EXPLORER</span>
<span class="t" style="top:91.00px;font-size:12.8px;color:#cccccc;font-weight:700;transform:translateX(79.70px) scaleX(0.9041);">VEEDRA</span>
<span class="t" style="top:116.00px;font-size:15.2px;color:#e2c08d;transform:translateX(95.93px) scaleX(0.9659);">client</span>
<span class="t" style="top:142.00px;font-size:15.2px;color:#8c8c8c;transform:translateX(105.00px) scaleX(0.9631);">.next</span>
<span class="t" style="top:167.00px;font-size:15.2px;color:#8c8c8c;transform:translateX(105.29px) scaleX(0.9743);">node_modules</span>
<span class="t" style="top:193.00px;font-size:15.2px;color:#cccccc;transform:translateX(105.27px) scaleX(1.0227);">public</span>
<span class="t" style="top:219.00px;font-size:15.2px;color:#73c991;transform:translateX(105.27px) scaleX(0.9200);">src</span>
<span class="t" style="top:244.00px;font-size:15.2px;color:#cccccc;transform:translateX(114.60px) scaleX(1.0445);">app</span>
<span class="t" style="top:270.00px;font-size:15.2px;color:#73c991;transform:translateX(114.60px) scaleX(1.0103);">components</span>
<span class="t" style="top:296.00px;font-size:15.2px;color:#cccccc;transform:translateX(114.62px) scaleX(0.9766);">hooks</span>
<span class="t" style="top:321.00px;font-size:15.2px;color:#73c991;transform:translateX(114.51px) scaleX(1.0910);">lib</span>
<span class="t" style="top:347.00px;font-size:15.2px;color:#73c991;transform:translateX(123.93px) scaleX(1.0054);">api</span>
<span class="t" style="top:373.00px;font-size:15.2px;color:#73c991;transform:translateX(123.93px) scaleX(1.0229);">config</span>
<span class="t" style="top:398.00px;font-size:15.2px;color:#73c991;transform:translateX(133.26px) scaleX(1.0337);">db</span>
<span class="t" style="top:424.00px;font-size:15.2px;color:#73c991;transform:translateX(142.61px) scaleX(0.9924);">models</span>
<span class="t" style="top:450.00px;font-size:15.2px;color:#73c991;transform:translateX(151.89px) scaleX(1.0399);">notification</span>
<span class="t" style="top:475.00px;font-size:15.2px;color:#73c991;transform:translateX(151.93px) scaleX(1.0265);">product</span>
<span class="t" style="top:501.00px;font-size:15.2px;color:#73c991;transform:translateX(151.93px) scaleX(0.9496);">user</span>
<span class="t" style="top:526.50px;font-size:12px;color:#519aba;font-weight:700;transform:translateX(130.33px) scaleX(0.9132);">TS</span>
<span class="t" style="top:527.00px;font-size:15.2px;color:#73c991;transform:translateX(151.96px) scaleX(0.9662);">index.ts</span>
<span class="t" style="top:527.00px;font-size:14px;color:#73c991;transform:translateX(376.20px) scaleX(1.0000);">U</span>
<span class="t" style="top:552.00px;font-size:15.2px;color:#73c991;transform:translateX(142.60px) scaleX(0.9808);">types</span>
<span class="t" style="top:577.50px;font-size:12px;color:#519aba;font-weight:700;transform:translateX(121.00px) scaleX(0.9132);">TS</span>
<span class="t" style="top:578.00px;font-size:15.2px;color:#73c991;transform:translateX(142.60px) scaleX(0.9958);">mongoose.ts</span>
<span class="t" style="top:578.00px;font-size:14px;color:#73c991;transform:translateX(376.20px) scaleX(1.0000);">U</span>
<span class="t" style="top:603.50px;font-size:12px;color:#519aba;font-weight:700;transform:translateX(111.66px) scaleX(0.9132);">TS</span>
<span class="t" style="top:604.00px;font-size:15.2px;color:#73c991;transform:translateX(133.30px) scaleX(0.9662);">index.ts</span>
<span class="t" style="top:604.00px;font-size:14px;color:#73c991;transform:translateX(376.20px) scaleX(1.0000);">U</span>
<span class="t" style="top:629.00px;font-size:15.2px;color:#73c991;transform:translateX(123.93px) scaleX(0.9481);">consts</span>
<span class="t" style="top:655.00px;font-size:15.2px;color:#73c991;transform:translateX(123.92px) scaleX(1.0103);">middleware</span>
<span class="t" style="top:681.00px;font-size:15.2px;color:#73c991;transform:translateX(123.93px) scaleX(0.9492);">schema</span>
<span class="t" style="top:706.00px;font-size:15.2px;color:#73c991;transform:translateX(123.93px) scaleX(0.9808);">types</span>
<span class="t" style="top:732.00px;font-size:15.2px;color:#73c991;transform:translateX(123.93px) scaleX(1.0214);">utils</span>
<span class="t" style="top:758.00px;font-size:15.2px;color:#73c991;transform:translateX(133.26px) scaleX(0.9935);">client</span>
<span class="t" style="top:783.00px;font-size:15.2px;color:#73c991;transform:translateX(133.26px) scaleX(0.9493);">server</span>
<span class="t" style="top:808.50px;font-size:12px;color:#519aba;font-weight:700;transform:translateX(111.66px) scaleX(0.9132);">TS</span>
<span class="t" style="top:809.00px;font-size:15.2px;color:#73c991;transform:translateX(133.30px) scaleX(0.9662);">index.ts</span>
<span class="t" style="top:809.00px;font-size:14px;color:#73c991;transform:translateX(376.20px) scaleX(1.0000);">U</span>
<span class="t" style="top:835.00px;font-size:15.2px;color:#73c991;transform:translateX(114.70px) scaleX(0.9333);">pages</span>
<span class="t" style="top:835.00px;font-size:15.2px;color:#5a8a6c;transform:translateX(157.60px) scaleX(0.8800);">\</span>
<span class="t" style="top:835.00px;font-size:15.2px;color:#73c991;transform:translateX(165.00px) scaleX(0.9903);">api</span>
<span class="t" style="top:860.00px;font-size:15.2px;color:#8c8c8c;transform:translateX(105.02px) scaleX(0.9497);">.env</span>
<span class="t" style="top:886.00px;font-size:15.2px;color:#cccccc;transform:translateX(104.92px) scaleX(1.0486);">.gitignore</span>
<span class="t" style="top:912.30px;font-size:12.6px;color:#cbcb41;font-weight:700;transform:translateX(84.97px) scaleX(0.7998);">JS</span>
<span class="t" style="top:912.00px;font-size:15.2px;color:#cccccc;transform:translateX(105.27px) scaleX(0.9839);">eslint.config.mjs</span>
<span class="t" style="top:946.00px;font-size:12.8px;color:#cccccc;font-weight:700;transform:translateX(79.70px) scaleX(0.9466);">OUTLINE</span>
<span class="t" style="top:972.00px;font-size:12.8px;color:#cccccc;font-weight:700;transform:translateX(79.70px) scaleX(0.9638);">TIMELINE</span>
<span class="t" style="top:56.50px;font-size:12px;color:#519aba;font-weight:700;transform:translateX(422.80px) scaleX(0.9132);">TS</span>
<span class="t" style="top:58.00px;font-size:15.2px;color:#73c991;transform:translateX(443.03px) scaleX(0.9662);">index.ts</span>
<span class="t" style="top:59.00px;font-size:13.6px;color:#579a72;transform:translateX(501.00px) scaleX(1.0030);">...\utils</span>
<span class="t" style="top:59.00px;font-size:13.4px;color:#5aa377;font-weight:700;transform:translateX(547.50px) scaleX(0.9778);">U</span>
<span class="t" style="top:56.50px;font-size:12px;color:#519aba;font-weight:700;transform:translateX(606.80px) scaleX(0.9132);">TS</span>
<span class="t" style="top:58.00px;font-size:15.2px;color:#73c991;transform:translateX(628.00px) scaleX(0.9887);">error.utils.ts</span>
<span class="t" style="top:59.00px;font-size:13.6px;color:#579a72;transform:translateX(712.49px) scaleX(1.0095);">...\client</span>
<span class="t" style="top:59.00px;font-size:13.4px;color:#5aa377;font-weight:700;transform:translateX(766.50px) scaleX(0.9778);">U</span>
<span class="t" style="top:56.50px;font-size:12px;color:#519aba;font-weight:700;transform:translateX(825.80px) scaleX(0.9132);">TS</span>
<span class="t" style="top:58.00px;font-size:15.2px;color:#73c991;transform:translateX(847.00px) scaleX(0.9715);">socket.client.utils.ts</span>
<span class="t" style="top:59.00px;font-size:13.4px;color:#5aa377;font-weight:700;transform:translateX(981.00px) scaleX(0.9778);">U</span>
<span class="t" style="top:56.50px;font-size:12px;color:#519aba;font-weight:700;transform:translateX(1040.30px) scaleX(0.9132);">TS</span>
<span class="t" style="top:58.00px;font-size:15.2px;color:#73c991;transform:translateX(1061.30px) scaleX(0.9887);">error.utils.ts</span>
<span class="t" style="top:59.00px;font-size:13.6px;color:#579a72;transform:translateX(1145.54px) scaleX(0.9551);">...\server</span>
<span class="t" style="top:59.00px;font-size:13.4px;color:#5aa377;font-weight:700;transform:translateX(1203.70px) scaleX(0.9778);">U</span>
<span class="t" style="top:56.50px;font-size:12px;color:#519aba;font-weight:700;transform:translateX(1263.00px) scaleX(0.9132);">TS</span>
<span class="t" style="top:58.00px;font-size:15.2px;color:#73c991;transform:translateX(1283.02px) scaleX(0.9804);">helper.server.utils.ts</span>
<span class="t" style="top:59.00px;font-size:13.4px;color:#5aa377;font-weight:700;transform:translateX(1421.50px) scaleX(0.9778);">U</span>
<span class="t" style="top:56.50px;font-size:12px;color:#519aba;font-weight:700;transform:translateX(1480.30px) scaleX(0.9132);">TS</span>
<span class="t" style="top:58.00px;font-size:15.2px;color:#73c991;transform:translateX(1501.50px) scaleX(0.9625);">socket.server.utils.ts</span>
<span class="t" style="top:59.00px;font-size:13.4px;color:#5aa377;font-weight:700;transform:translateX(1640.00px) scaleX(0.9778);">U</span>
<span class="t" style="top:56.50px;font-size:12px;color:#519aba;font-weight:700;transform:translateX(1699.30px) scaleX(0.9132);">TS</span>
<span class="t" style="top:58.00px;font-size:15.2px;color:#73c991;transform:translateX(1720.50px) scaleX(0.9410);">email.serv</span>
<span class="t" style="top:91.00px;font-size:15.2px;color:#a9a9a9;transform:translateX(425.00px) scaleX(0.9714);">client</span>
<span class="t" style="top:91.00px;font-size:15.2px;color:#a9a9a9;transform:translateX(479.40px) scaleX(0.9055);">src</span>
<span class="t" style="top:91.00px;font-size:15.2px;color:#a9a9a9;transform:translateX(516.19px) scaleX(1.1056);">lib</span>
<span class="t" style="top:91.00px;font-size:15.2px;color:#a9a9a9;transform:translateX(552.20px) scaleX(0.9776);">utils</span>
<span class="t" style="top:90.00px;font-size:12px;color:#519aba;font-weight:700;transform:translateX(602.20px) scaleX(0.9132);">TS</span>
<span class="t" style="top:91.00px;font-size:15.2px;color:#a9a9a9;transform:translateX(622.51px) scaleX(0.9856);">index.ts</span>
<span class="t m" style="top:117.00px;font-size:17.13px;color:#6e7681;transform:translateX(451.80px) scaleX(1.0012);">1</span>
<span class="t m" style="top:117.00px;font-size:17.13px;color:#6a9955;transform:translateX(491.80px) scaleX(1.0012);">// @/lib/utils/index.ts</span>
<span class="t m" style="top:143.00px;font-size:17.13px;color:#6e7681;transform:translateX(451.80px) scaleX(1.0012);">2</span>
<span class="t m" style="top:168.00px;font-size:17.13px;color:#6e7681;transform:translateX(451.80px) scaleX(1.0012);">3</span>
<span class="t m" style="top:168.00px;font-size:17.13px;color:#c586c0;transform:translateX(491.80px) scaleX(1.0012);">export</span>
<span class="t m" style="top:168.00px;font-size:17.13px;color:#ffd700;transform:translateX(563.76px) scaleX(1.0012);">{</span>
<span class="t m" style="top:168.00px;font-size:17.13px;color:#dcdcaa;transform:translateX(574.04px) scaleX(1.0012);"> asyncErrorHandler </span>
<span class="t m" style="top:168.00px;font-size:17.13px;color:#ffd700;transform:translateX(769.36px) scaleX(1.0012);">}</span>
<span class="t m" style="top:168.00px;font-size:17.13px;color:#c586c0;transform:translateX(789.92px) scaleX(1.0012);">from</span>
<span class="t m" style="top:168.00px;font-size:17.13px;color:#ce9178;transform:translateX(841.32px) scaleX(1.0012);">&quot;./client/error.utils&quot;</span>
<span class="t m" style="top:194.00px;font-size:17.13px;color:#cccccc;transform:translateX(451.80px) scaleX(1.0012);">4</span>
<span class="t m" style="top:220.00px;font-size:17.13px;color:#6e7681;transform:translateX(451.80px) scaleX(1.0012);">5</span>
<span class="t m" style="top:220.00px;font-size:17.13px;color:#6a9955;transform:translateX(491.80px) scaleX(1.0012);">// server</span>
<span class="t m" style="top:245.00px;font-size:17.13px;color:#6e7681;transform:translateX(451.80px) scaleX(1.0012);">6</span>
<span class="t m" style="top:245.00px;font-size:17.13px;color:#c586c0;transform:translateX(491.80px) scaleX(1.0012);">export</span>
<span class="t m" style="top:245.00px;font-size:17.13px;color:#ffd700;transform:translateX(563.76px) scaleX(1.0012);">{</span>
<span class="t m" style="top:245.00px;font-size:17.13px;color:#4fc1ff;transform:translateX(584.32px) scaleX(1.0012);">jwtServerUtils</span>
<span class="t m" style="top:245.00px;font-size:17.13px;color:#ffd700;transform:translateX(738.52px) scaleX(1.0012);">}</span>
<span class="t m" style="top:245.00px;font-size:17.13px;color:#c586c0;transform:translateX(759.08px) scaleX(1.0012);">from</span>
<span class="t m" style="top:245.00px;font-size:17.13px;color:#ce9178;transform:translateX(810.48px) scaleX(1.0012);">&quot;./server/jwt.utils&quot;</span>
<span class="t m" style="top:271.00px;font-size:17.13px;color:#6e7681;transform:translateX(451.80px) scaleX(1.0012);">7</span>
<span class="t m" style="top:271.00px;font-size:17.13px;color:#c586c0;transform:translateX(491.80px) scaleX(1.0012);">export</span>
<span class="t m" style="top:271.00px;font-size:17.13px;color:#ffd700;transform:translateX(563.76px) scaleX(1.0012);">{</span>
<span class="t m" style="top:271.00px;font-size:17.13px;color:#dcdcaa;transform:translateX(574.04px) scaleX(1.0012);"> errorHandler </span>
<span class="t m" style="top:271.00px;font-size:17.13px;color:#ffd700;transform:translateX(717.96px) scaleX(1.0012);">}</span>
<span class="t m" style="top:271.00px;font-size:17.13px;color:#c586c0;transform:translateX(738.52px) scaleX(1.0012);">from</span>
<span class="t m" style="top:271.00px;font-size:17.13px;color:#ce9178;transform:translateX(789.92px) scaleX(1.0012);">&quot;./server/error.utils&quot;</span>
<span class="t m" style="top:297.00px;font-size:17.13px;color:#6e7681;transform:translateX(451.80px) scaleX(1.0012);">8</span>
<span class="t m" style="top:297.00px;font-size:17.13px;color:#c586c0;transform:translateX(491.80px) scaleX(1.0012);">export</span>
<span class="t m" style="top:297.00px;font-size:17.13px;color:#ffd700;transform:translateX(563.76px) scaleX(1.0012);">{</span>
<span class="t m" style="top:297.00px;font-size:17.13px;color:#4fc1ff;transform:translateX(584.32px) scaleX(1.0012);">investmentServerUtils</span>
<span class="t m" style="top:297.00px;font-size:17.13px;color:#ffd700;transform:translateX(810.48px) scaleX(1.0012);">}</span>
<span class="t m" style="top:297.00px;font-size:17.13px;color:#c586c0;transform:translateX(831.04px) scaleX(1.0012);">from</span>
<span class="t m" style="top:297.00px;font-size:17.13px;color:#ce9178;transform:translateX(882.44px) scaleX(1.0012);">&quot;./server/investment.utils&quot;</span>
<span class="t" style="top:811.00px;font-size:12.8px;color:#9d9d9d;transform:translateX(429.60px) scaleX(0.8941);">OUTPUT</span>
<span class="t" style="top:811.00px;font-size:12.8px;color:#9d9d9d;transform:translateX(504.70px) scaleX(0.8973);">DEBUG CONSOLE</span>
<span class="t" style="top:811.00px;font-size:12.8px;color:#e7e7e7;transform:translateX(633.30px) scaleX(0.9166);">TERMINAL</span>
<span class="t" style="top:811.00px;font-size:12.8px;color:#9d9d9d;transform:translateX(720.52px) scaleX(0.8767);">PROBLEMS</span>
<span class="t" style="top:811.00px;font-size:12.8px;color:#9d9d9d;transform:translateX(810.94px) scaleX(0.8555);">PORTS</span>
<span class="t" style="top:810.00px;font-size:14px;color:#cccccc;transform:translateX(1631.60px) scaleX(0.8950);">powershell</span>
<span class="t m" style="top:855.00px;font-size:15.8px;color:#cccccc;transform:translateX(428.90px) scaleX(0.8898);letter-spacing:-0.5px;">(base) PS C:\Users\ASUS USER\OneDrive\Desktop\freelance\Techentia2.0\veedra&gt;</span>
<span class="t" style="top:996.00px;font-size:14.2px;color:#cccccc;transform:translateX(70.00px) scaleX(0.9522);">master*</span>
<span class="t" style="top:996.00px;font-size:14.2px;color:#cccccc;transform:translateX(184.50px) scaleX(0.8250);">0</span>
<span class="t" style="top:996.00px;font-size:14.2px;color:#cccccc;transform:translateX(218.50px) scaleX(0.8250);">0</span>
<span class="t" style="top:996.00px;font-size:14.2px;color:#cccccc;transform:translateX(265.89px) scaleX(0.9113);">Live Share</span>
<span class="t" style="top:996.00px;font-size:14.2px;color:#cccccc;transform:translateX(1237.27px) scaleX(0.9302);">Ln 4, Col 1</span>
<span class="t" style="top:996.00px;font-size:14.2px;color:#cccccc;transform:translateX(1321.20px) scaleX(0.8987);">Spaces: 4</span>
<span class="t" style="top:996.00px;font-size:14.2px;color:#cccccc;transform:translateX(1396.07px) scaleX(0.9287);">UTF-8</span>
<span class="t" style="top:996.00px;font-size:14.2px;color:#cccccc;transform:translateX(1452.50px) scaleX(0.8159);">CRLF</span>
<span class="t" style="top:996.50px;font-size:15.4px;color:#cccccc;transform:translateX(1503.00px) scaleX(1.0000);">{</span>
<span class="t" style="top:996.50px;font-size:15.4px;color:#cccccc;transform:translateX(1513.50px) scaleX(1.0000);">}</span>
<span class="t" style="top:996.00px;font-size:14.2px;color:#cccccc;transform:translateX(1527.70px) scaleX(0.9436);">TypeScript</span>
<span class="t" style="top:996.00px;font-size:14.2px;color:#cccccc;transform:translateX(1670.20px) scaleX(0.9101);">Go Live</span>
<span class="t" style="top:996.00px;font-size:14.2px;color:#cccccc;transform:translateX(1756.51px) scaleX(0.9860);">Ninja</span>
<span class="t" style="top:996.00px;font-size:14.2px;color:#cccccc;transform:translateX(1829.52px) scaleX(0.9844);">Prettier</span>
</body></html>
